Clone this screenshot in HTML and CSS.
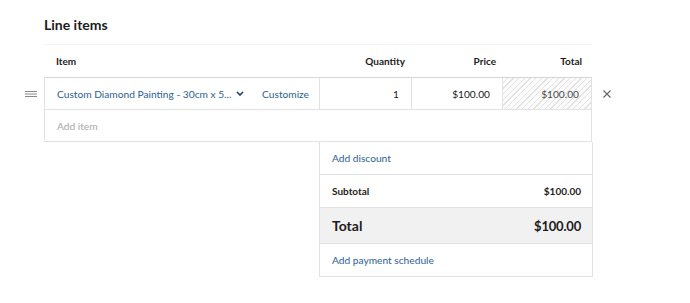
FILE: index.html
```html
<!DOCTYPE html>
<html>
<head>
    <link rel="stylesheet" href="styles.css">
</head>
<body>
    <div class="sheet">
        <div class="title">Line items</div>

        <div class="cols head">
            <div class="cell">Item</div>
            <div class="cell num">Quantity</div>
            <div class="cell num">Price</div>
            <div class="cell num last">Total</div>
        </div>

        <div class="line">
            <div class="handle">
                <svg width="12" height="6" viewBox="0 0 12 6"><path d="M0 0.5H12M0 3H12M0 5.5H12" stroke="#888" stroke-width="1"/></svg>
            </div>
            <div class="cols row">
                <div class="cell item">
                    <span class="link name">Custom Diamond Painting - 30cm x 5...</span>
                    <svg class="chev" width="8" height="5" viewBox="0 0 8 5"><path d="M1 1L4 4L7 1" fill="none" stroke="#1d3d6e" stroke-width="1.6"/></svg>
                    <span class="link customize">Customize</span>
                </div>
                <div class="cell num">1</div>
                <div class="cell num">$100.00</div>
                <div class="cell num hatched">$100.00</div>
            </div>
            <div class="remove">
                <svg width="8" height="8" viewBox="0 0 8 8"><path d="M0.5 0.5L7.5 7.5M7.5 0.5L0.5 7.5" stroke="#666" stroke-width="1.1"/></svg>
            </div>
        </div>

        <div class="add-item">Add item</div>

        <div class="totals">
            <div class="trow"><span class="link">Add discount</span></div>
            <div class="trow sub"><span>Subtotal</span><span>$100.00</span></div>
            <div class="trow grand"><span>Total</span><span class="amount">$100.00</span></div>
            <div class="trow"><span class="link">Add payment schedule</span></div>
        </div>
    </div>
</body>
</html>
```

FILE: styles.css
```css
body {
    margin: 0;
    padding: 0;
    background: #fff;
    color: #1c1c1c;
    font-family: 'Lato', 'Liberation Sans', sans-serif;
}
.sheet {
    padding-top: 15px;
}
.title {
    margin-left: 44px;
    font-size: 14px;
    font-weight: bold;
    line-height: 20px;
    height: 29px;
}
.cols {
    display: grid;
    grid-template-columns: 275px 92px 91px 90px;
    width: 548px;
}
.cell {
    padding: 0 12px;
    display: flex;
    align-items: center;
    white-space: nowrap;
}
.num {
    justify-content: flex-end;
}
.head {
    margin-left: 44px;
    border-top: 1px solid #f4f4f4;
    height: 32px;
    font-size: 10px;
    font-weight: bold;
}
.head .cell.num {
    padding-right: 6px;
}
.head .cell.last {
    padding-right: 10px;
}
.line {
    display: flex;
}
.handle {
    width: 44px;
    display: flex;
    align-items: center;
    justify-content: flex-end;
    padding-right: 7px;
    box-sizing: border-box;
}
.row {
    box-sizing: border-box;
    border: 1px solid #e2e2e2;
    border-top-color: #d6d6d6;
    height: 33px;
    font-size: 10.2px;
    grid-template-columns: 274px 92px 91px 89px;
}
.row .cell + .cell {
    border-left: 1px solid #e2e2e2;
}
.item {
    padding-right: 10px;
}
.link {
    color: #2c6193;
}
.chev {
    margin-left: 5px;
}
.customize {
    margin-left: auto;
}
.hatched {
    color: #4a4a4a;
    background: repeating-linear-gradient(135deg, #fbfbfb 0, #fbfbfb 3px, #e2e2e2 3px, #e2e2e2 4px);
}
.remove {
    width: 30px;
    display: flex;
    align-items: center;
    justify-content: center;
}
.add-item {
    margin-left: 44px;
    width: 548px;
    box-sizing: border-box;
    height: 32px;
    border: 1px solid #e2e2e2;
    border-top: none;
    padding-left: 12px;
    display: flex;
    align-items: center;
    font-size: 10.2px;
    color: #a8a8a8;
}
.totals {
    margin-left: 319px;
    width: 274px;
    box-sizing: border-box;
    border: 1px solid #e2e2e2;
    border-top: none;
    font-size: 10.2px;
}
.trow {
    display: flex;
    justify-content: space-between;
    align-items: center;
    height: 32px;
    padding: 0 11px 0 12px;
    border-bottom: 1px solid #e2e2e2;
}
.trow:last-child {
    border-bottom: none;
}
.sub {
    font-size: 10px;
    font-weight: bold;
}
.grand {
    height: 35px;
    background: #f1f1f1;
    font-size: 14px;
    font-weight: bold;
}
.grand .amount {
    font-size: 13px;
    letter-spacing: -0.2px;
}
```
